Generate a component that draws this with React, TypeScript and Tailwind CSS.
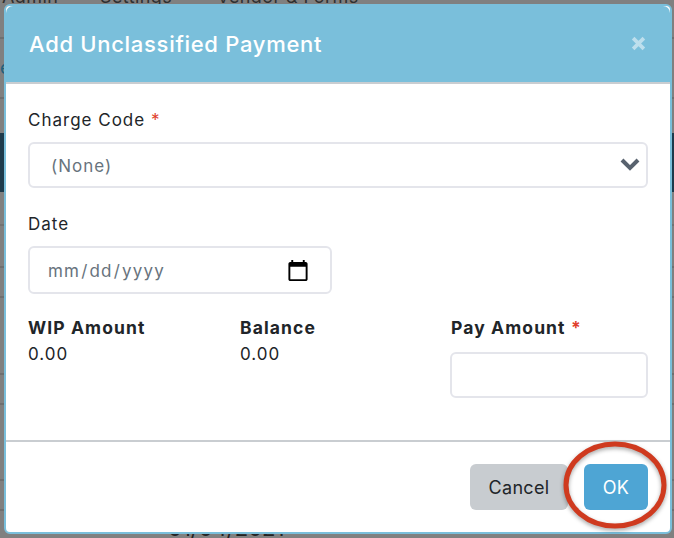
function Backdrop() {
  return (
    <div className="h-[538px] w-[674px] overflow-hidden bg-[#808080] font-['Inter',sans-serif]">
      <div className="flex h-[39px] border-b-2 border-[#6f6f6f] pl-[2px] text-[18px] leading-none tracking-[0.4px] text-[#2f2f2f]">
        <span className="mt-[-12px] w-[98px]">Admin</span>
        <span className="mt-[-12px] w-[117px]">Settings</span>
        <span className="mt-[-12px]">Vendor &amp; Forms</span>
      </div>
      <div className="h-[60px] border-b-2 border-[#6f6f6f] pt-[20px] text-[18px] leading-none text-[#1f5f7c]">e</div>
      <div className="h-[34px]" />
      <div className="h-[59px] bg-[#1d3a4b]" />
      <div className="h-[34px] border-b-2 border-[#727272]" />
      <div className="h-[42px] border-b-2 border-[#6f6f6f]" />
      <div className="h-[30px] border-b-2 border-[#6f6f6f]" />
      <div className="h-[77px] border-b-2 border-[#6f6f6f]" />
      <div className="h-[30px] border-b-2 border-[#6f6f6f]" />
      <div className="h-[76px] border-b-2 border-[#6f6f6f]" />
      <div className="h-[30px] border-b-2 border-[#6f6f6f]" />
      <div className="pl-[168px] pt-[6px] text-[22px] leading-none text-[#222]">01/04/2021</div>
    </div>
  );
}

export default function App() {
  return (
    <div className="relative h-[538px] w-[674px] overflow-hidden font-['Inter',sans-serif] text-[#212529]">
      <Backdrop />

      <div className="absolute left-1 top-1 flex h-[530px] w-[668px] flex-col rounded-[6px] border-2 border-[#7abfdb] bg-white">
        <header className="flex h-[78px] shrink-0 items-center justify-between rounded-t-[7px] border-b-2 border-[#c9cdd1] bg-[#7abfdb] pl-[23px] pr-[24px]">
          <h1 className="text-[22px] font-medium leading-none tracking-[0.7px] text-white">Add Unclassified Payment</h1>
          <svg viewBox="0 0 14 14" className="mb-[1px] h-[15px] w-[15px]" aria-label="Close">
            <path d="M2 2 12 12M12 2 2 12" stroke="#bddfed" strokeWidth="3.4" fill="none" />
          </svg>
        </header>

        <form className="flex flex-1 flex-col">
          <div className="h-[358px] shrink-0 border-b-2 border-[#c9cdd1] px-[22px] pt-[25px] text-[17px] leading-[22px] tracking-[1px]">
            <label className="block">
              Charge Code <span className="text-[#e0402b]">*</span>
            </label>
            <div className="relative mt-[11px]">
              <select className="h-[46px] w-full appearance-none rounded-[6px] border-2 border-[#e4e5eb] bg-white pl-[21px] pt-[2px] text-[#68737d]">
                <option>(None)</option>
              </select>
              <svg viewBox="0 0 20 14" className="absolute right-[8px] top-[15px] h-[14px] w-[20px]">
                <path d="M2 3 10 11 18 3" stroke="#58626e" strokeWidth="4" fill="none" />
              </svg>
            </div>

            <label className="mt-[25px] block">Date</label>
            <input
              type="date"
              className="mt-[11px] block h-[48px] w-[304px] rounded-[6px] border-2 border-[#e4e5eb] bg-white pl-[17px] pr-[20px] pt-[1px] tracking-[1.2px] text-[#68737d] [&::-webkit-calendar-picker-indicator]:h-[24px] [&::-webkit-calendar-picker-indicator]:w-[24px] [&::-webkit-calendar-picker-indicator]:p-0"
            />

            <div className="mt-[23px] grid grid-cols-[212px_210px_198px]">
              <div>
                <div className="text-[17.5px] font-bold tracking-[1.1px]">WIP Amount</div>
                <div className="mt-[4px]">0.00</div>
              </div>
              <div>
                <div className="text-[17.5px] font-bold tracking-[1.1px]">Balance</div>
                <div className="mt-[4px]">0.00</div>
              </div>
              <div>
                <label className="block pl-[1px] text-[17.5px] font-bold tracking-[1.1px]">
                  Pay Amount <span className="text-[#e0402b]">*</span>
                </label>
                <input type="text" className="mt-[13px] block h-[46px] w-full rounded-[6px] border-2 border-[#e4e5eb] bg-white" />
              </div>
            </div>
          </div>

          <div className="flex flex-1 items-start justify-end gap-[16px] pr-[22px] pt-[22px] text-[18px] tracking-[0.3px]">
            <button type="button" className="h-[46px] w-[98px] rounded-[6px] bg-[#c8ccd0] text-[#212529]">Cancel</button>
            <button type="button" className="h-[46px] w-[64px] rounded-[6px] bg-[#4ea5d4] text-white">OK</button>
          </div>
        </form>
      </div>

      {/* hand-drawn annotation round the OK button */}
      <svg viewBox="0 0 674 538" className="pointer-events-none absolute left-0 top-0 h-[538px] w-[674px] drop-shadow-[0_2px_2px_rgba(0,0,0,0.35)]">
        <ellipse cx="615" cy="485" rx="49" ry="41" stroke="#cf3a1f" strokeWidth="5" fill="none" />
      </svg>
    </div>
  );
}
